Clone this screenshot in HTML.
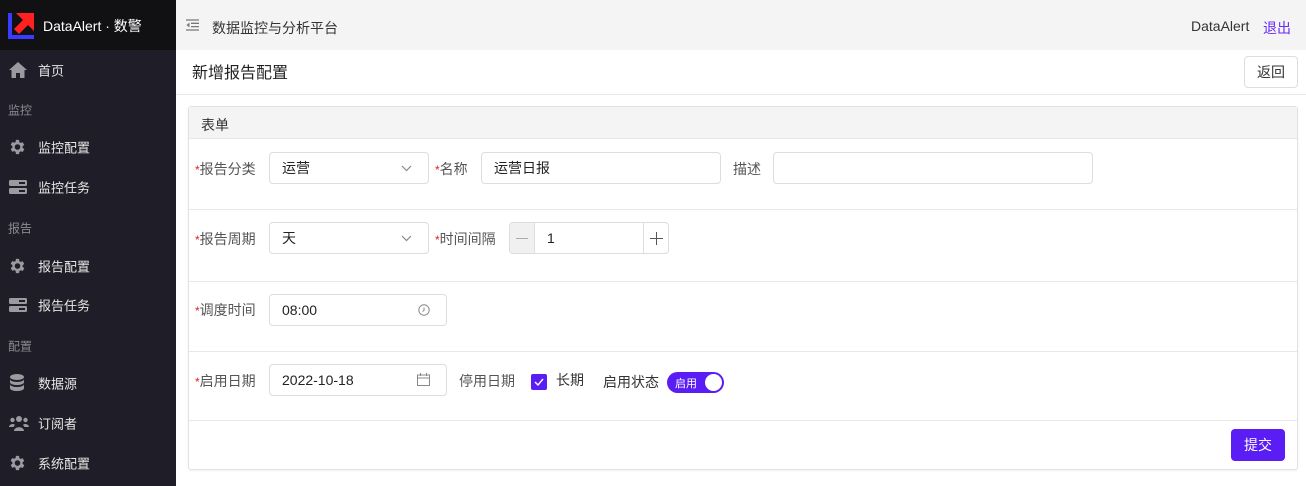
<!DOCTYPE html>
<html><head><meta charset="utf-8"><style>
*{box-sizing:border-box;margin:0;padding:0}
body{width:1306px;height:486px;overflow:hidden;font-family:"Liberation Sans","Noto Sans CJK SC",sans-serif;font-size:14px;color:#333;background:#fff;position:relative}
.a{position:absolute}
.side{left:0;top:0;width:176px;height:486px;background:#1f1d27}
.logo{left:0;top:0;width:176px;height:50px;background:#111113}
.mi{position:absolute;left:38px;color:#e6e6e6;font-size:13px;transform:translateY(-50%)}
.sec{position:absolute;left:8px;color:#8a8a90;font-size:12px;transform:translateY(-50%)}
.ic{position:absolute;left:9px;transform:translateY(-50%)}
.lbl{position:absolute;font-size:14px;color:#555;transform:translateY(-50%)}
.lbl b{color:#e02020;font-weight:normal;font-size:12px}
.inp{position:absolute;border:1px solid #ddd;border-radius:4px;height:32px;background:#fff;font-size:14px;color:#222;padding:0 12px;line-height:30px}
.hr{position:absolute;left:189px;width:1108px;height:1px;background:#e8e8e8}
</style></head><body>
<div class="a side"></div>
<div class="a logo">
<svg class="a" style="left:8px;top:13px" width="26" height="26" viewBox="0 0 26 26"><path d="M0 0h4v22h22v4H0z" fill="#3b3bff"/><path d="M8 0h18v18l-6-6-9 9-5-5 9-9z" fill="#ff2020"/></svg>
<div class="a" style="left:43px;top:16px;color:#fff;font-size:14px">DataAlert · 数警</div>
</div>
<svg class="ic" style="top:70px" width="18" height="16" viewBox="0 0 18 16"><path d="M9 0L0 8h2.5v8h4.5v-5h4v5h4.5V8H18z" fill="#9a9aa0"/></svg>
<div class="mi" style="top:70px">首页</div>
<div class="sec" style="top:110px">监控</div>
<svg class="ic" style="top:147px;left:8px" width="19" height="19" viewBox="0 0 24 24"><path fill="#9a9aa0" d="M19.4 13a7.5 7.5 0 000-2l2.1-1.6-2-3.5-2.5 1a7.6 7.6 0 00-1.7-1L15 3h-4l-.4 2.7a7.6 7.6 0 00-1.7 1l-2.5-1-2 3.5L6.6 11a7.5 7.5 0 000 2l-2.2 1.6 2 3.5 2.5-1a7.6 7.6 0 001.7 1L11 21h4l.4-2.7a7.6 7.6 0 001.7-1l2.5 1 2-3.5zM13 15.5a3.5 3.5 0 110-7 3.5 3.5 0 010 7z" transform="translate(-1 0)"/></svg>
<div class="mi" style="top:147px">监控配置</div>
<svg class="ic" style="top:187px" width="18" height="14" viewBox="0 0 18 14"><rect y="0" width="18" height="6" rx="1.5" fill="#9a9aa0"/><rect y="8" width="18" height="6" rx="1.5" fill="#9a9aa0"/><rect x="10" y="2" width="6" height="2" fill="#1f1d27"/><rect x="10" y="10" width="6" height="2" fill="#1f1d27"/></svg>
<div class="mi" style="top:187px">监控任务</div>
<div class="sec" style="top:228px">报告</div>
<svg class="ic" style="top:266px;left:8px" width="19" height="19" viewBox="0 0 24 24"><path fill="#9a9aa0" d="M19.4 13a7.5 7.5 0 000-2l2.1-1.6-2-3.5-2.5 1a7.6 7.6 0 00-1.7-1L15 3h-4l-.4 2.7a7.6 7.6 0 00-1.7 1l-2.5-1-2 3.5L6.6 11a7.5 7.5 0 000 2l-2.2 1.6 2 3.5 2.5-1a7.6 7.6 0 001.7 1L11 21h4l.4-2.7a7.6 7.6 0 001.7-1l2.5 1 2-3.5zM13 15.5a3.5 3.5 0 110-7 3.5 3.5 0 010 7z" transform="translate(-1 0)"/></svg>
<div class="mi" style="top:266px">报告配置</div>
<svg class="ic" style="top:305px" width="18" height="14" viewBox="0 0 18 14"><rect y="0" width="18" height="6" rx="1.5" fill="#9a9aa0"/><rect y="8" width="18" height="6" rx="1.5" fill="#9a9aa0"/><rect x="10" y="2" width="6" height="2" fill="#1f1d27"/><rect x="10" y="10" width="6" height="2" fill="#1f1d27"/></svg>
<div class="mi" style="top:305px">报告任务</div>
<div class="sec" style="top:346px">配置</div>
<svg class="ic" style="top:383px" width="16" height="18" viewBox="0 0 16 18"><ellipse cx="8" cy="3" rx="7" ry="3" fill="#9a9aa0"/><path d="M1 5c0 4 14 4 14 0v3c0 4-14 4-14 0zM1 10c0 4 14 4 14 0v4c0 4-14 4-14 0z" fill="#9a9aa0"/></svg>
<div class="mi" style="top:383px">数据源</div>
<svg class="ic" style="top:423px" width="20" height="16" viewBox="0 0 20 16"><circle cx="10" cy="4" r="3" fill="#9a9aa0"/><circle cx="3.5" cy="5" r="2.2" fill="#9a9aa0"/><circle cx="16.5" cy="5" r="2.2" fill="#9a9aa0"/><path d="M5 16c0-5 10-5 10 0zM0 12c0-3 5-4 6-2-1 1-1.5 2-1.5 2zM20 12c0-3-5-4-6-2 1 1 1.5 2 1.5 2z" fill="#9a9aa0"/></svg>
<div class="mi" style="top:423px">订阅者</div>
<svg class="ic" style="top:463px;left:8px" width="19" height="19" viewBox="0 0 24 24"><path fill="#9a9aa0" d="M19.4 13a7.5 7.5 0 000-2l2.1-1.6-2-3.5-2.5 1a7.6 7.6 0 00-1.7-1L15 3h-4l-.4 2.7a7.6 7.6 0 00-1.7 1l-2.5-1-2 3.5L6.6 11a7.5 7.5 0 000 2l-2.2 1.6 2 3.5 2.5-1a7.6 7.6 0 001.7 1L11 21h4l.4-2.7a7.6 7.6 0 001.7-1l2.5 1 2-3.5zM13 15.5a3.5 3.5 0 110-7 3.5 3.5 0 010 7z" transform="translate(-1 0)"/></svg>
<div class="mi" style="top:463px">系统配置</div>

<div class="a" style="left:176px;top:0;width:1130px;height:50px;background:#f4f4f4"></div>
<svg class="a" style="left:186px;top:19px" width="13" height="12" viewBox="0 0 13 12"><path d="M0 1h13M5 4.3h8M5 7.6h8M0 11h13" stroke="#777" stroke-width="1.3"/><path d="M3.5 3.5L0.5 6l3 2.5z" fill="#777"/></svg>
<div class="a" style="left:212px;top:18px;font-size:14px;color:#333">数据监控与分析平台</div>
<div class="a" style="left:1191px;top:18px;font-size:14px;color:#333">DataAlert</div>
<div class="a" style="left:1263px;top:18px;font-size:14px;color:#6a2cf5">退出</div>

<div class="a" style="left:192px;top:59px;font-size:16px;color:#222">新增报告配置</div>
<div class="a" style="left:1244px;top:56px;width:54px;height:32px;border:1px solid #ddd;border-radius:4px;text-align:center;line-height:30px;font-size:14px;color:#333">返回</div>
<div class="a" style="left:176px;top:94px;width:1130px;height:1px;background:#e8e8e8"></div>

<div class="a" style="left:188px;top:106px;width:1110px;height:364px;border:1px solid #e2e2e2;border-radius:3px;box-shadow:0 1px 2px rgba(0,0,0,.06)"></div>
<div class="a" style="left:189px;top:107px;width:1108px;height:32px;background:#f4f4f4;border-bottom:1px solid #e6e6e6"></div>
<div class="a" style="left:201px;top:115px;font-size:14px;color:#333">表单</div>

<div class="hr" style="top:209px"></div>
<div class="hr" style="top:281px"></div>
<div class="hr" style="top:351px"></div>
<div class="hr" style="top:420px"></div>

<div class="lbl" style="left:195px;top:169px"><b>*</b>报告分类</div>
<div class="inp" style="left:269px;top:152px;width:160px">运营<svg class="a" style="right:16px;top:12px" width="11" height="7" viewBox="0 0 11 7"><path d="M1 1l4.5 4.5L10 1" stroke="#888" fill="none" stroke-width="1.2"/></svg></div>
<div class="lbl" style="left:435px;top:169px"><b>*</b>名称</div>
<div class="inp" style="left:481px;top:152px;width:240px">运营日报</div>
<div class="lbl" style="left:733px;top:169px">描述</div>
<div class="inp" style="left:773px;top:152px;width:320px"></div>

<div class="lbl" style="left:195px;top:239px"><b>*</b>报告周期</div>
<div class="inp" style="left:269px;top:222px;width:160px">天<svg class="a" style="right:16px;top:12px" width="11" height="7" viewBox="0 0 11 7"><path d="M1 1l4.5 4.5L10 1" stroke="#888" fill="none" stroke-width="1.2"/></svg></div>
<div class="lbl" style="left:435px;top:239px"><b>*</b>时间间隔</div>
<div class="inp" style="left:509px;top:222px;width:160px;padding:0;overflow:hidden">
<div class="a" style="left:0;top:0;width:25px;height:30px;background:#f0f0f0;border-right:1px solid #ddd"><div class="a" style="left:6px;top:15px;width:12px;height:1px;background:#aaa"></div></div>
<div class="a" style="left:37px;top:0">1</div>
<div class="a" style="left:133px;top:0;width:25px;height:30px;border-left:1px solid #ddd"><div class="a" style="left:6px;top:15px;width:13px;height:1.3px;background:#555"></div><div class="a" style="left:12px;top:9px;width:1.3px;height:13px;background:#555"></div></div>
</div>

<div class="lbl" style="left:195px;top:310px"><b>*</b>调度时间</div>
<div class="inp" style="left:269px;top:294px;width:178px">08:00<svg class="a" style="right:16px;top:9px" width="12" height="12" viewBox="0 0 12 12"><circle cx="6" cy="6" r="5.2" stroke="#888" fill="none"/><path d="M6 3.5V6.5L4.5 7.5" stroke="#888" fill="none"/></svg></div>

<div class="lbl" style="left:195px;top:381px"><b>*</b>启用日期</div>
<div class="inp" style="left:269px;top:364px;width:178px">2022-10-18<svg class="a" style="right:16px;top:8px" width="13" height="13" viewBox="0 0 13 13"><rect x="0.5" y="2" width="12" height="10.5" stroke="#888" fill="none"/><path d="M0.5 5h12M3.5 0v3M9.5 0v3" stroke="#888"/></svg></div>
<div class="lbl" style="left:459px;top:381px">停用日期</div>
<div class="a" style="left:531px;top:374px;width:16px;height:16px;background:#5a1ef5;border-radius:2px"><svg class="a" style="left:3px;top:4px" width="10" height="8" viewBox="0 0 10 8"><path d="M1 4l3 3 5-6" stroke="#fff" fill="none" stroke-width="1.4"/></svg></div>
<div class="lbl" style="left:556px;top:380px;color:#333">长期</div>
<div class="lbl" style="left:603px;top:382px;color:#333">启用状态</div>
<div class="a" style="left:667px;top:372px;width:57px;height:21px;background:#5a1ef5;border-radius:11px"><span class="a" style="left:8px;top:3px;color:#fff;font-size:11px">启用</span><div class="a" style="left:38px;top:2px;width:17px;height:17px;border-radius:50%;background:#fff"></div></div>

<div class="a" style="left:1231px;top:429px;width:54px;height:32px;background:#5a1ef5;border-radius:4px;color:#fff;text-align:center;line-height:32px;font-size:14px">提交</div>
</body></html>
